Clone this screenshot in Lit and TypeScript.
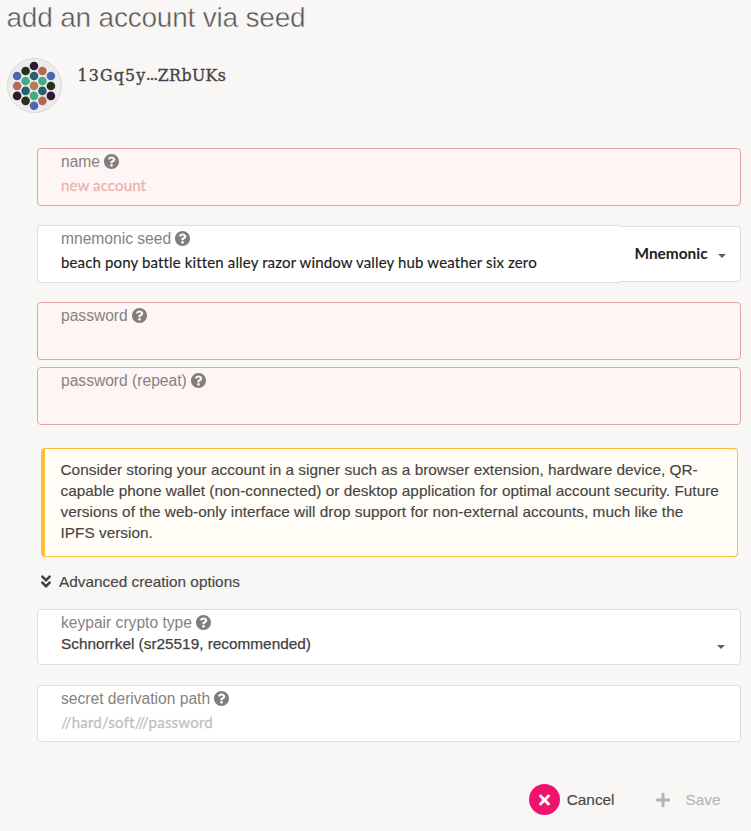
import { LitElement, html, svg, css, nothing } from "lit";
import { customElement } from "lit/decorators.js";

const HELP = "M504 256c0 136.997-111.043 248-248 248S8 392.997 8 256C8 119.083 119.043 8 256 8s248 111.083 248 248zM262.655 90c-54.497 0-89.255 22.957-116.549 63.758-3.536 5.286-2.353 12.415 2.715 16.258l34.699 26.31c5.205 3.947 12.621 3.008 16.665-2.122 17.864-22.658 30.113-35.797 57.303-35.797 20.429 0 45.698 13.148 45.698 32.958 0 14.976-12.363 22.667-32.534 33.976C247.128 238.528 216 254.941 216 296v4c0 6.627 5.373 12 12 12h56c6.627 0 12-5.373 12-12v-1.333c0-28.462 83.186-29.647 83.186-106.667 0-58.002-60.165-102-116.531-102zM256 338c-25.365 0-46 20.635-46 46 0 25.364 20.635 46 46 46s46-20.636 46-46c0-25.364-20.635-46-46-46z";
const PLUS = "M416 208H272V64c0-17.67-14.33-32-32-32h-32c-17.67 0-32 14.33-32 32v144H32c-17.67 0-32 14.33-32 32v32c0 17.67 14.33 32 32 32h144v144c0 17.67 14.33 32 32 32h32c17.67 0 32-14.33 32-32V304h144c17.67 0 32-14.33 32-32v-32c0-17.67-14.33-32-32-32z";
const TIMES = "M242.72 256l100.07-100.07c12.28-12.28 12.28-32.19 0-44.48l-22.24-22.24c-12.28-12.28-32.19-12.28-44.48 0L176 189.28 75.93 89.21c-12.28-12.28-32.19-12.28-44.48 0L9.21 111.45c-12.28 12.28-12.28 32.19 0 44.48L109.28 256 9.21 356.07c-12.28 12.28-12.28 32.19 0 44.48l22.24 22.24c12.28 12.28 32.2 12.28 44.48 0L176 322.72l100.07 100.07c12.28 12.28 32.2 12.28 44.48 0l22.24-22.24c12.28-12.28 12.28-32.19 0-44.48L242.72 256z";
const CHEVRONS = "M143 256.3L7 120.3c-9.4-9.4-9.4-24.6 0-33.9l22.6-22.6c9.4-9.4 24.6-9.4 33.9 0l96.4 96.4 96.4-96.4c9.4-9.4 24.6-9.4 33.9 0L313 86.3c9.4 9.4 9.4 24.6 0 33.9l-136 136c-9.4 9.5-24.6 9.5-34 .1zm34 192l136-136c9.4-9.4 9.4-24.6 0-33.9l-22.6-22.6c-9.4-9.4-24.6-9.4-33.9 0L160 352.1l-96.4-96.4c-9.4-9.4-24.6-9.4-33.9 0L7 278.3c-9.4 9.4-9.4 24.6 0 33.9l136 136c9.4 9.5 24.6 9.5 34 .1z";

const PURPLE = "#311830", OLIVE = "#283019", RED = "#b66855", BLUE = "#4b67b0";
const TEAL = "#28616f", GREEN = "#42ad80", SAND = "#b27c57";

// Columns of the identicon, left to right: x, first y, colours downwards.
const COLUMNS: [number, number, string[]][] = [
  [10.1, 18, [BLUE, RED, PURPLE]],
  [18.6, 13, [OLIVE, GREEN, TEAL, OLIVE]],
  [27, 8, [PURPLE, TEAL, SAND, GREEN, BLUE]],
  [35.4, 13, [RED, GREEN, TEAL, RED]],
  [43.9, 18, [BLUE, OLIVE, PURPLE]],
];

@customElement("account-identicon")
class AccountIdenticon extends LitElement {
  static styles = css`
    :host { display: block; width: 55px; height: 55px; }
    svg { display: block; }
  `;
  render() {
    return html`<svg width="55" height="55" viewBox="0 0 55 55">
      <circle cx="27.5" cy="27.5" r="27" fill="#ececec" stroke="#d9d9d9" stroke-width="1" />
      ${COLUMNS.map(([x, y0, colors]) =>
        colors.map((c, i) => svg`<circle cx=${x} cy=${y0 + i * 9.95} r="4.3" fill=${c} />`))}
    </svg>`;
  }
}

@customElement("form-field")
class FormField extends LitElement {
  static properties = { label: {}, value: {}, hint: {}, error: { type: Boolean, reflect: true } };
  label!: string;
  value?: string;
  hint?: string;
  error?: boolean;
  static styles = css`
    :host {
      display: flex; box-sizing: border-box; height: 58px;
      border: 1px solid #dededf; border-radius: 4px; background: #fff;
      color: #202020;
    }
    :host([error]) { border-color: #e0a5a6; background: #fff5f4; }
    .body { flex: 1; padding: 3px 0 0 23px; min-width: 0; }
    .label {
      display: flex; align-items: center; gap: 4px; height: 19px;
      font: 15.6px/19px "Liberation Sans", Arial, sans-serif; font-kerning: none;
      color: #848382;
    }
    .label svg { width: 15px; height: 15px; fill: #807f7e; }
    .value {
      font: 15px/21px Lato, sans-serif; margin-top: 4px; white-space: nowrap;
      font-variant-ligatures: none; letter-spacing: 0.14px; -webkit-text-stroke: 0.15px currentColor;
    }
    .hint { color: #bfbfbf; -webkit-text-stroke-width: 0.3px; }
    :host([error]) .hint { color: #e9b3b2; }
    :host(.path) .hint { letter-spacing: 0.22px; }
    :host(.select) .value {
      font: 15.35px/21px "Liberation Sans", Arial, sans-serif; color: #404040;
      margin-top: 1px; letter-spacing: 0; -webkit-text-stroke: 0.25px #404040;
    }
  `;
  render() {
    return html`
      <div class="body">
        <div class="label"><span>${this.label}</span>
          <svg viewBox="8 8 496 496"><path d=${HELP} /></svg>
        </div>
        ${this.value ? html`<div class="value">${this.value}</div>` : nothing}
        ${this.hint ? html`<div class="value hint">${this.hint}</div>` : nothing}
      </div>
      <slot></slot>`;
  }
}

@customElement("app-root")
class AppRoot extends LitElement {
  static styles = css`
    :host {
      display: block; box-sizing: border-box; width: 751px; height: 831px; overflow: hidden;
      background: #f8f7f6; color: #454545;
      font: 15.35px/21px "Liberation Sans", Arial, sans-serif;
    }
    h1 {
      margin: 0; padding: 0 0 0 6.5px; height: 57px; box-sizing: border-box;
      font-size: 28px; line-height: 35px; font-weight: 400; letter-spacing: -0.2px;
      color: #565555; -webkit-text-stroke: 0.45px #f8f7f6;
    }
    .account { display: flex; gap: 15.5px; padding: 1px 0 0 7px; height: 91px; box-sizing: border-box; }
    .address {
      display: flex; font: 15.8px/24px "DejaVu Serif", "Courier New", serif;
      padding-top: 6px; color: #444; -webkit-text-stroke: 0.35px #444;
    }
    .head { letter-spacing: 1.15px; }
    .dots { width: 11.5px; font-size: 11.5px; font-weight: bold; }
    .tail { letter-spacing: 0.4px; }
    .form { display: flex; flex-direction: column; margin: 0 10px 0 37px; }
    .repeat { margin-top: 7px; }
    .crypto { height: 56px; margin-top: 17px; }
    .path { height: 57px; margin-top: 20px; }
    .seedrow { display: grid; grid-template-columns: 582px 122px; align-items: center; margin: 19px 0; }
    .seed { border-right: 0; border-radius: 4px 0 0 4px; }
    .kind {
      display: flex; align-items: center; justify-content: space-between;
      height: 56px; box-sizing: border-box; padding: 0 14.5px 2px 15.5px;
      border: 1px solid #dededf; border-left: 0; border-radius: 0 4px 4px 0; background: #fff;
      font: bold 15.4px/20px Lato, sans-serif; color: #202020;
    }
    .caret {
      width: 0; height: 0; border: 4.5px solid transparent; border-top: 4.5px solid #606060;
      border-bottom: 0; margin-top: 6px;
    }
    .crypto .caret { margin: 35px 15px 0 0; }
    .warning {
      margin: 23px 3px 0 4px; padding: 10px 14px 0 15.5px; height: 109px; box-sizing: border-box;
      border: 1px solid #fdbd39; border-left-width: 4px; border-radius: 4px;
      background: #fffdf6; white-space: nowrap; letter-spacing: 0.02px;
      -webkit-text-stroke: 0.15px #454545;
    }
    .advanced {
      display: flex; align-items: center; gap: 8px; margin: 14px 0 0 4px; height: 21px;
      -webkit-text-stroke: 0.15px #454545;
    }
    .advanced svg { width: 10px; height: 13px; fill: #404040; }
    .actions {
      display: flex; align-items: center; justify-content: flex-end;
      height: 31px; margin-top: 42px; padding-right: 20.5px;
      -webkit-text-stroke: 0.15px currentColor;
    }
    .round {
      display: grid; place-items: center; width: 31px; height: 31px; border-radius: 50%;
      background: #f0126f; margin-right: 6.5px;
    }
    .round svg { width: 11px; height: 16px; fill: #fff; }
    .plus { width: 14px; height: 16px; fill: #b5b4b4; margin: 0 15.5px 0 41.5px; }
    .save { color: #b5b4b4; }
  `;
  render() {
    return html`
      <h1>add an account via seed</h1>
      <div class="account">
        <account-identicon></account-identicon>
        <div class="address"><span class="head">13Gq5y</span><span class="dots">…</span><span class="tail">ZRbUKs</span></div>
      </div>
      <div class="form">
        <form-field error label="name" hint="new account"></form-field>
        <div class="seedrow">
          <form-field class="seed" label="mnemonic seed"
            value="beach pony battle kitten alley razor window valley hub weather six zero"></form-field>
          <div class="kind">Mnemonic<span class="caret"></span></div>
        </div>
        <form-field error label="password"></form-field>
        <form-field error class="repeat" label="password (repeat)"></form-field>
        <div class="warning">
          Consider storing your account in a signer such as a browser extension, hardware device, QR-<br>
          capable phone wallet (non-connected) or desktop application for optimal account security. Future<br>
          versions of the web-only interface will drop support for non-external accounts, much like the<br>
          IPFS version.
        </div>
        <div class="advanced">
          <svg viewBox="0 56 320 400"><path d=${CHEVRONS} /></svg>
          <span>Advanced creation options</span>
        </div>
        <form-field class="crypto select" label="keypair crypto type"
          value="Schnorrkel (sr25519, recommended)"><span class="caret"></span></form-field>
        <form-field class="path" label="secret derivation path" hint="//hard/soft///password"></form-field>
        <div class="actions">
          <span class="round"><svg viewBox="0 0 352 512"><path d=${TIMES} /></svg></span>
          <span>Cancel</span>
          <svg class="plus" viewBox="0 0 448 512"><path d=${PLUS} /></svg>
          <span class="save">Save</span>
        </div>
      </div>`;
  }
}
